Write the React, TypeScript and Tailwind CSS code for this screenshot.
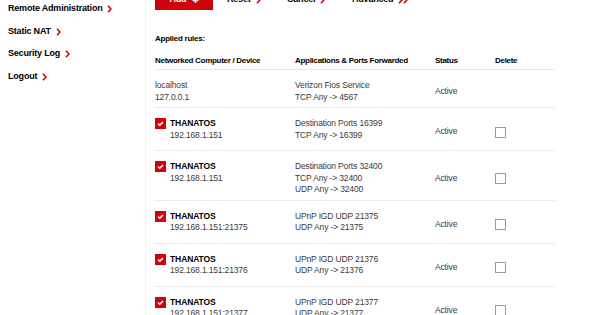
import React from 'react';

const RED = 'bg-[#cd040b]';

const Chevron: React.FC<{ double?: boolean }> = ({ double }) => (
  <svg width={double ? 10 : 5} height="8" viewBox={double ? '0 0 10 8' : '0 0 5 8'} className="shrink-0">
    <path d="M1 0.8 L4 4 L1 7.2" fill="none" stroke="#cd040b" strokeWidth="1.6" />
    {double && <path d="M6 0.8 L9 4 L6 7.2" fill="none" stroke="#cd040b" strokeWidth="1.6" />}
  </svg>
);

const RedCheck: React.FC = () => (
  <div className={`w-[11px] h-[11px] ${RED} flex items-center justify-center shrink-0`}>
    <svg width="11" height="11" viewBox="0 0 11 11">
      <path d="M3 5.6 L4.8 7.3 L8 4" fill="none" stroke="#fff" strokeWidth="1.5" />
    </svg>
  </div>
);

type Rule = {
  name: string;
  ip: string;
  apps: string[];
  selectable: boolean;
};

const rules: Rule[] = [
  { name: 'localhost', ip: '127.0.0.1', apps: ['Verizon Fios Service', 'TCP Any -> 4567'], selectable: false },
  { name: 'THANATOS', ip: '192.168.1.151', apps: ['Destination Ports 16399', 'TCP Any -> 16399'], selectable: true },
  {
    name: 'THANATOS',
    ip: '192.168.1.151',
    apps: ['Destination Ports 32400', 'TCP Any -> 32400', 'UDP Any -> 32400'],
    selectable: true,
  },
  { name: 'THANATOS', ip: '192.168.1.151:21375', apps: ['UPnP IGD UDP 21375', 'UDP Any -> 21375'], selectable: true },
  { name: 'THANATOS', ip: '192.168.1.151:21376', apps: ['UPnP IGD UDP 21376', 'UDP Any -> 21376'], selectable: true },
  { name: 'THANATOS', ip: '192.168.1.151:21377', apps: ['UPnP IGD UDP 21377', 'UDP Any -> 21377'], selectable: true },
];

const sideLinks = ['Remote Administration', 'Static NAT', 'Security Log', 'Logout'];

const App: React.FC = () => {
  return (
    <div
      className="w-[600px] h-[315px] overflow-hidden bg-white flex"
      style={{ fontFamily: '"Liberation Sans", Arial, sans-serif' }}
    >
      {/* Sidebar */}
      <div className="w-[146px] shrink-0 border-r border-[#efefef] pt-[3px] pl-[8px] flex flex-col gap-[10.5px]">
        {sideLinks.map((l) => (
          <div key={l} className="h-[12px] flex items-center gap-[5px] text-[9px] font-bold text-black tracking-[-0.2px]">
            <span>{l}</span>
            <Chevron />
          </div>
        ))}
      </div>

      {/* Main */}
      <div className="flex-1 pl-[9px]">
        {/* Action buttons */}
        <div className="mt-[-10px] h-[20px] flex items-center text-[9px] font-bold tracking-[-0.2px]">
          <div className={`w-[58px] h-[20px] ${RED} text-white flex items-center justify-center gap-[6px]`}>
            <span>Add</span>
            <span className="text-[11px] leading-none">+</span>
          </div>
          <div className="ml-[14px] w-[60px] flex items-center gap-[5px] text-black">
            <span>Reset</span>
            <Chevron />
          </div>
          <div className="w-[65px] flex items-center gap-[5px] text-black">
            <span>Cancel</span>
            <Chevron />
          </div>
          <div className="flex items-center gap-[5px] text-black">
            <span>Advanced</span>
            <Chevron double />
          </div>
        </div>

        <div className="mt-[23px] h-[12px] leading-[12px] text-[8px] font-bold text-black tracking-[-0.25px]">
          Applied rules:
        </div>

        {/* Table */}
        <div className="w-[400px]">
          <div className="grid grid-cols-[140px_140px_60px_60px] pt-[10px] pb-[2px] border-b border-[#e8e8e8] text-[8px] leading-[12px] font-bold text-black tracking-[-0.3px]">
            <div>Networked Computer / Device</div>
            <div>Applications &amp; Ports Forwarded</div>
            <div>Status</div>
            <div>Delete</div>
          </div>

          {rules.map((r, i) => (
            <div
              key={i}
              className="grid grid-cols-[140px_140px_60px_60px] pt-[10px] pb-[4px] border-b border-[#ececec] text-[8.5px] leading-[11.5px] text-[#3a3a3a] tracking-[-0.15px]"
            >
              <div className="self-start flex gap-[4px]">
                {r.selectable ? (
                  <>
                    <RedCheck />
                    <div>
                      <div className="font-bold text-black tracking-[-0.1px]">{r.name}</div>
                      <div>{r.ip}</div>
                    </div>
                  </>
                ) : (
                  <div>
                    <div>{r.name}</div>
                    <div>{r.ip}</div>
                  </div>
                )}
              </div>
              <div className="self-start">
                {r.apps.map((a) => (
                  <div key={a}>{a}</div>
                ))}
              </div>
              <div className="self-center">Active</div>
              <div className="self-center">
                {r.selectable && (
                  <div className="h-[28px] flex items-center">
                    <div className="w-[11px] h-[11px] border border-[#9a9a9a] bg-white" />
                  </div>
                )}
              </div>
            </div>
          ))}
        </div>
      </div>
    </div>
  );
};

export default App;
